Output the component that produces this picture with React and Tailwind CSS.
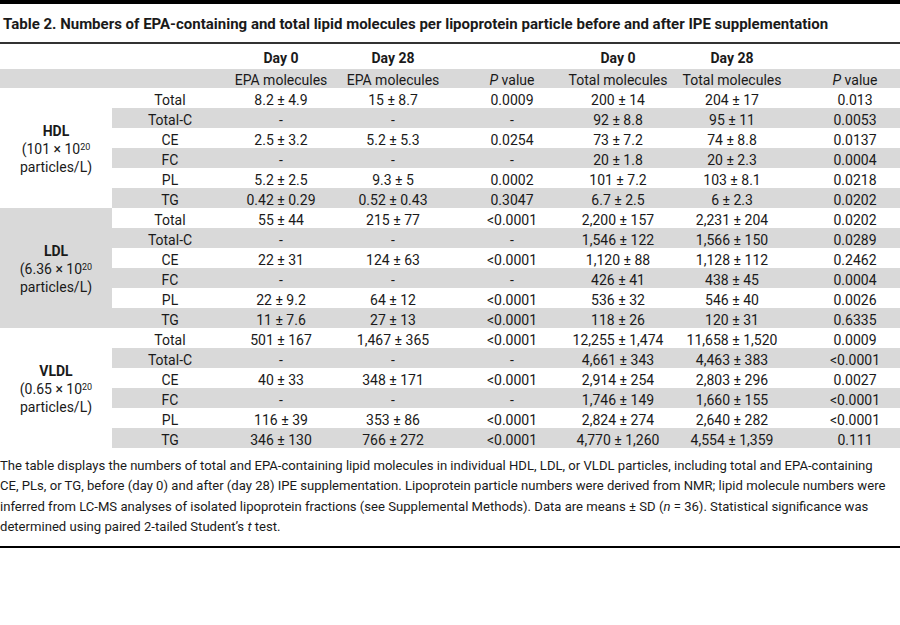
import React from 'react';

const cols = 'grid grid-cols-[116px_106px_118px_120px_92px_136px_110px]';
const cell = 'flex items-center justify-center whitespace-nowrap';

const groups = [
  {
    name: 'HDL',
    conc: '101',
    bg: 'bg-white',
    rows: [
      ['Total', '8.2 ± 4.9', '15 ± 8.7', '0.0009', '200 ± 14', '204 ± 17', '0.013'],
      ['Total-C', '-', '-', '-', '92 ± 8.8', '95 ± 11', '0.0053'],
      ['CE', '2.5 ± 3.2', '5.2 ± 5.3', '0.0254', '73 ± 7.2', '74 ± 8.8', '0.0137'],
      ['FC', '-', '-', '-', '20 ± 1.8', '20 ± 2.3', '0.0004'],
      ['PL', '5.2 ± 2.5', '9.3 ± 5', '0.0002', '101 ± 7.2', '103 ± 8.1', '0.0218'],
      ['TG', '0.42 ± 0.29', '0.52 ± 0.43', '0.3047', '6.7 ± 2.5', '6 ± 2.3', '0.0202'],
    ],
  },
  {
    name: 'LDL',
    conc: '6.36',
    bg: 'bg-[#d9d9d9]',
    rows: [
      ['Total', '55 ± 44', '215 ± 77', '<0.0001', '2,200 ± 157', '2,231 ± 204', '0.0202'],
      ['Total-C', '-', '-', '-', '1,546 ± 122', '1,566 ± 150', '0.0289'],
      ['CE', '22 ± 31', '124 ± 63', '<0.0001', '1,120 ± 88', '1,128 ± 112', '0.2462'],
      ['FC', '-', '-', '-', '426 ± 41', '438 ± 45', '0.0004'],
      ['PL', '22 ± 9.2', '64 ± 12', '<0.0001', '536 ± 32', '546 ± 40', '0.0026'],
      ['TG', '11 ± 7.6', '27 ± 13', '<0.0001', '118 ± 26', '120 ± 31', '0.6335'],
    ],
  },
  {
    name: 'VLDL',
    conc: '0.65',
    bg: 'bg-white',
    rows: [
      ['Total', '501 ± 167', '1,467 ± 365', '<0.0001', '12,255 ± 1,474', '11,658 ± 1,520', '0.0009'],
      ['Total-C', '-', '-', '-', '4,661 ± 343', '4,463 ± 383', '<0.0001'],
      ['CE', '40 ± 33', '348 ± 171', '<0.0001', '2,914 ± 254', '2,803 ± 296', '0.0027'],
      ['FC', '-', '-', '-', '1,746 ± 149', '1,660 ± 155', '<0.0001'],
      ['PL', '116 ± 39', '353 ± 86', '<0.0001', '2,824 ± 274', '2,640 ± 282', '<0.0001'],
      ['TG', '346 ± 130', '766 ± 272', '<0.0001', '4,770 ± 1,260', '4,554 ± 1,359', '0.111'],
    ],
  },
];

const Group = ({ g }) => (
  <div className="flex">
    <div className={`w-[112px] shrink-0 flex flex-col items-center justify-center pt-[2px] leading-[18px] ${g.bg}`}>
      <span className="font-bold">{g.name}</span>
      <span>
        ({g.conc} × 10<sup className="text-[9px]">20</sup>
      </span>
      <span>particles/L)</span>
    </div>
    <div className="flex-1">
      {g.rows.map((r, i) => (
        <div key={i} className={`${cols} h-[20px] pt-[2px] ${i % 2 ? 'bg-[#d9d9d9]' : 'bg-white'}`}>
          {r.map((v, j) => (
            <div key={j} className={cell}>{v}</div>
          ))}
        </div>
      ))}
    </div>
  </div>
);

export default function App() {
  return (
    <div className="w-[900px] h-[625px] overflow-hidden bg-white text-[#1a1a1a] font-['Roboto',sans-serif] text-[14px]">
      <div className="h-[4px] bg-black" />
      <h1 className="h-[38px] pl-[3px] pt-[2px] flex items-center text-[15px] font-bold">
        Table 2. Numbers of EPA-containing and total lipid molecules per lipoprotein particle before and after IPE supplementation
      </h1>
      <div className="h-[2px] bg-[#333]" />

      <div className="flex h-[25px] font-bold">
        <div className="w-[112px] shrink-0" />
        <div className={`${cols} flex-1`}>
          <div />
          <div className={`${cell} items-end`}>Day 0</div>
          <div className={`${cell} items-end`}>Day 28</div>
          <div />
          <div className={`${cell} items-end`}>Day 0</div>
          <div className={`${cell} items-end`}>Day 28</div>
          <div />
        </div>
      </div>
      <div className="flex h-[19px] pt-[1px] bg-[#d9d9d9]">
        <div className="w-[112px] shrink-0" />
        <div className={`${cols} flex-1`}>
          <div />
          <div className={cell}>EPA molecules</div>
          <div className={cell}>EPA molecules</div>
          <div className={cell}><i>P</i>&nbsp;value</div>
          <div className={cell}>Total molecules</div>
          <div className={cell}>Total molecules</div>
          <div className={cell}><i>P</i>&nbsp;value</div>
        </div>
      </div>

      {groups.map(g => <Group key={g.name} g={g} />)}

      <p className="pt-[8px] pb-[8px] leading-[20.4px] text-[13.1px]">
        The table displays the numbers of total and EPA-containing lipid molecules in individual HDL, LDL, or VLDL particles, including total and EPA-containing
        <br />
        CE, PLs, or TG, before (day 0) and after (day 28) IPE supplementation. Lipoprotein particle numbers were derived from NMR; lipid molecule numbers were
        <br />
        inferred from LC-MS analyses of isolated lipoprotein fractions (see Supplemental Methods). Data are means ± SD (<i>n</i> = 36). Statistical significance was
        <br />
        determined using paired 2-tailed Student’s <i>t</i> test.
      </p>
      <div className="h-[2px] bg-black" />
    </div>
  );
}
